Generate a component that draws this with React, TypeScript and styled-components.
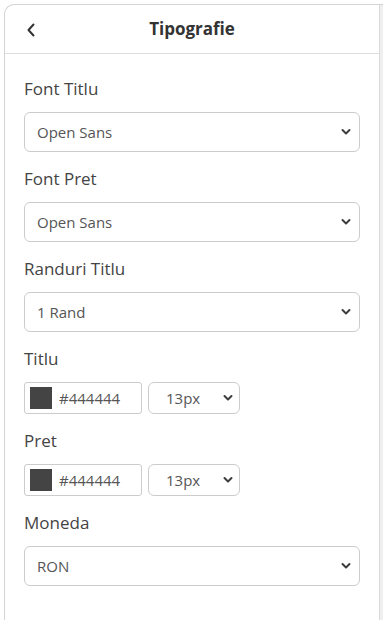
import React from 'react';
import styled, { createGlobalStyle } from 'styled-components';

const GlobalStyle = createGlobalStyle`
  html, body {
    margin: 0;
    padding: 0;
    background: #ffffff;
  }
  body {
    font-family: "Open Sans", "Liberation Sans", sans-serif;
    color: #444444;
  }
  * {
    box-sizing: border-box;
  }
`;

const StyledFrame = styled.div`
  display: flex;
  margin: 4px 0 0 4px;
  height: 616px;
  border-top: 1px solid #d4d4d4;
  border-left: 1px solid #d4d4d4;
  border-top-left-radius: 10px;
  overflow: hidden;
`;

const StyledPanel = styled.div`
  flex: 1;
  display: flex;
  flex-direction: column;
  border-right: 1px solid #dadada;
`;

const StyledGutter = styled.div`
  width: 3px;
  background: #efefef;
`;

const StyledHeader = styled.div`
  position: relative;
  display: flex;
  align-items: center;
  justify-content: center;
  height: 49px;
  border-bottom: 1px solid #dedede;
`;

const StyledBack = styled.button`
  position: absolute;
  left: 14px;
  top: 13px;
  width: 24px;
  height: 24px;
  display: flex;
  align-items: center;
  justify-content: center;
  padding: 0;
  border: none;
  background: none;
  cursor: pointer;
`;

const StyledTitle = styled.span`
  font-size: 17px;
  font-weight: 700;
  color: #333333;
  line-height: 24px;
`;

const StyledContent = styled.div`
  display: flex;
  flex-direction: column;
  gap: 15px;
  padding: 23px 19px 0 19px;
`;

const StyledSection = styled.div`
  display: flex;
  flex-direction: column;
`;

const StyledLabel = styled.span`
  font-size: 17px;
  line-height: 24px;
  color: #444444;
  margin-bottom: 11px;
`;

const StyledSelectWrap = styled.div<{ $width?: string; $arrowRight?: number }>`
  position: relative;
  width: ${({ $width }) => $width || '100%'};

  svg {
    position: absolute;
    right: ${({ $arrowRight }) => $arrowRight ?? 10}px;
    top: 50%;
    transform: translateY(-50%);
    pointer-events: none;
  }
`;

const StyledSelect = styled.select<{ $height?: number; $center?: boolean }>`
  appearance: none;
  width: 100%;
  height: ${({ $height }) => $height || 40}px;
  padding: 0 24px 0 ${({ $center }) => ($center ? 17 : 12)}px;
  border: 1px solid #cccccc;
  border-radius: 6px;
  background: #ffffff;
  font-family: "Open Sans", "Liberation Sans", sans-serif;
  font-size: 15px;
  color: #555555;
  outline: none;
`;

const StyledRow = styled.div`
  display: flex;
  gap: 6px;
`;

const StyledColorBox = styled.label`
  display: flex;
  align-items: center;
  gap: 7px;
  width: 118px;
  height: 32px;
  padding: 0 5px;
  border: 1px solid #cccccc;
  border-radius: 3px;
  background: #ffffff;
`;

const StyledSwatch = styled.span<{ $color: string }>`
  width: 22px;
  height: 22px;
  background: ${({ $color }) => $color};
`;

const StyledColorText = styled.input`
  width: 70px;
  border: none;
  padding: 0;
  font-family: "Open Sans", "Liberation Sans", sans-serif;
  font-size: 15px;
  color: #555555;
  outline: none;
  background: transparent;
`;

const Chevron = () => (
  <svg width="10" height="7" viewBox="0 0 10 7" fill="none">
    <path d="M1.5 1.5 L5 5 L8.5 1.5" stroke="#3d3d3d" strokeWidth="2" strokeLinecap="round" strokeLinejoin="round" />
  </svg>
);

const BackIcon = () => (
  <svg width="10" height="14" viewBox="0 0 10 14" fill="none">
    <path d="M7.5 1.5 L2.5 7 L7.5 12.5" stroke="#333333" strokeWidth="2" strokeLinecap="round" strokeLinejoin="round" />
  </svg>
);

const FullSelect = ({ value, options }: { value: string; options: string[] }) => (
  <StyledSelectWrap $arrowRight={9}>
    <StyledSelect defaultValue={value}>
      {options.map((o) => (
        <option key={o}>{o}</option>
      ))}
    </StyledSelect>
    <Chevron />
  </StyledSelectWrap>
);

const ColorRow = ({ color, size }: { color: string; size: string }) => (
  <StyledRow>
    <StyledColorBox>
      <StyledSwatch $color={color} />
      <StyledColorText defaultValue={color} />
    </StyledColorBox>
    <StyledSelectWrap $width="92px" $arrowRight={7}>
      <StyledSelect $height={32} $center defaultValue={size}>
        {['11px', '12px', '13px', '14px', '15px', '16px'].map((o) => (
          <option key={o}>{o}</option>
        ))}
      </StyledSelect>
      <Chevron />
    </StyledSelectWrap>
  </StyledRow>
);

const fonts = ['Open Sans', 'Roboto', 'Lato', 'Inter'];

export default function App() {
  return (
    <>
      <GlobalStyle />
      <StyledFrame>
        <StyledPanel>
          <StyledHeader>
            <StyledBack aria-label="Inapoi">
              <BackIcon />
            </StyledBack>
            <StyledTitle>Tipografie</StyledTitle>
          </StyledHeader>
          <StyledContent>
            <StyledSection>
              <StyledLabel>Font Titlu</StyledLabel>
              <FullSelect value="Open Sans" options={fonts} />
            </StyledSection>
            <StyledSection>
              <StyledLabel>Font Pret</StyledLabel>
              <FullSelect value="Open Sans" options={fonts} />
            </StyledSection>
            <StyledSection>
              <StyledLabel>Randuri Titlu</StyledLabel>
              <FullSelect value="1 Rand" options={['1 Rand', '2 Randuri', '3 Randuri']} />
            </StyledSection>
            <StyledSection>
              <StyledLabel>Titlu</StyledLabel>
              <ColorRow color="#444444" size="13px" />
            </StyledSection>
            <StyledSection>
              <StyledLabel>Pret</StyledLabel>
              <ColorRow color="#444444" size="13px" />
            </StyledSection>
            <StyledSection>
              <StyledLabel>Moneda</StyledLabel>
              <FullSelect value="RON" options={['RON', 'EUR', 'USD']} />
            </StyledSection>
          </StyledContent>
        </StyledPanel>
        <StyledGutter />
      </StyledFrame>
    </>
  );
}
